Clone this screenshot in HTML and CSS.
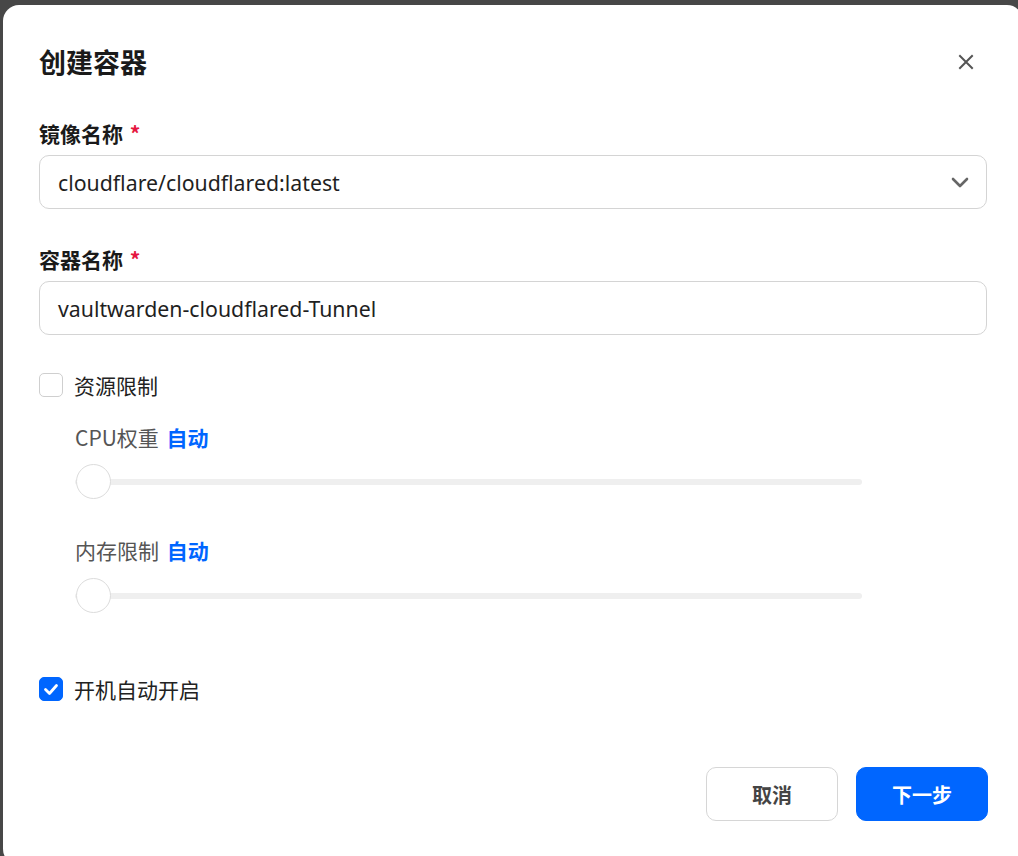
FILE: index.html
```html
<!DOCTYPE html>
<html lang="zh-CN">
<head>
<meta charset="utf-8">
<title>创建容器</title>
<link rel="stylesheet" href="styles.css">
</head>
<body>
<div class="dialog">
  <div class="header">
    <h1 class="title">创建容器</h1>
    <button class="close" aria-label="关闭">
      <svg width="16" height="16" viewBox="0 0 16 16"><path d="M2 2 L14 14 M14 2 L2 14" stroke="#555" stroke-width="2" fill="none" stroke-linecap="square"/></svg>
    </button>
  </div>

  <div class="field first">
    <div class="label">镜像名称 <span class="req">*</span></div>
    <div class="input select">
      <span>cloudflare/cloudflared:latest</span>
      <svg class="chev" width="20" height="20" viewBox="0 0 20 20"><path d="M3 7 L10 14 L17 7" stroke="#666" stroke-width="2.6" fill="none" stroke-linecap="round" stroke-linejoin="round"/></svg>
    </div>
  </div>

  <div class="field second">
    <div class="label">容器名称 <span class="req">*</span></div>
    <div class="input"><span>vaultwarden-cloudflared-Tunnel</span></div>
  </div>

  <div class="check-row res">
    <span class="box"></span>
    <span class="check-text">资源限制</span>
  </div>

  <div class="sub">
    <div class="sub-label cpu">CPU权重 <span class="auto">自动</span></div>
    <div class="slider s1"><div class="track"></div><div class="thumb"></div></div>
    <div class="sub-label mem">内存限制 <span class="auto">自动</span></div>
    <div class="slider s2"><div class="track"></div><div class="thumb"></div></div>
  </div>

  <div class="check-row boot">
    <span class="box checked">
      <svg width="24" height="24" viewBox="0 0 24 24"><path d="M6.5 12.5 L10.5 16.5 L17.5 8.5" stroke="#fff" stroke-width="2.8" fill="none" stroke-linecap="round" stroke-linejoin="round"/></svg>
    </span>
    <span class="check-text">开机自动开启</span>
  </div>

  <div class="footer">
    <button class="btn cancel">取消</button>
    <button class="btn primary">下一步</button>
  </div>
</div>
</body>
</html>
```

FILE: styles.css
```css
html, body {
  margin: 0;
  padding: 0;
  height: 100%;
  overflow: hidden;
}
body {
  background: #474747;
  font-family: "Noto Sans", "Noto Sans CJK SC", sans-serif;
  color: #222;
  padding: 5px 0 0 3px;
  box-sizing: border-box;
}
.dialog {
  width: 1020px;
  height: 860px;
  background: #fff;
  border-radius: 16px;
  padding: 0 36px;
  box-sizing: border-box;
}
.header {
  display: flex;
  align-items: center;
  justify-content: space-between;
  padding-top: 38px;
  height: 38px;
  box-sizing: content-box;
}
.title {
  margin: 0;
  font-size: 27px;
  font-weight: 700;
  line-height: 38px;
  color: #1a1a1a;
  font-family: "Noto Sans CJK SC", sans-serif;
}
.close {
  border: 0;
  background: none;
  padding: 0;
  width: 16px;
  height: 16px;
  margin-right: 13px;
  display: flex;
}
.field.first { margin-top: 40px; }
.field.second { margin-top: 38px; }
.label {
  font-family: "Noto Sans CJK SC", sans-serif;
  font-size: 21px;
  font-weight: 700;
  line-height: 24px;
  color: #1a1a1a;
  margin-bottom: 10px;
}
.req { color: #e5173f; margin-left: 2px; }
.input {
  height: 54px;
  border: 1px solid #d4d4d4;
  border-radius: 10px;
  box-sizing: border-box;
  display: flex;
  align-items: center;
  justify-content: space-between;
  padding: 0 16px 0 18px;
  font-size: 21.3px;
  color: #1f1f1f;
}
.chev { display: block; }
.check-row {
  display: flex;
  align-items: center;
  height: 24px;
}
.check-row.res { margin-top: 38px; }
.check-row.boot { margin-top: 63px; }
.box {
  width: 24px;
  height: 24px;
  box-sizing: border-box;
  border: 1.5px solid #cfcfcf;
  border-radius: 5px;
  margin-right: 11px;
  display: flex;
}
.box.checked {
  background: #0066ff;
  border-color: #0066ff;
}
.box.checked svg { margin: -1.5px; }
.check-text {
  font-family: "Noto Sans CJK SC", sans-serif;
  font-size: 21px;
  color: #222;
  line-height: 24px;
}
.sub { padding-left: 36px; }
.sub-label {
  font-family: "Noto Sans CJK SC", sans-serif;
  font-size: 21px;
  line-height: 24px;
  color: #555;
}
.sub-label.cpu { margin-top: 28px; }
.sub-label.mem { margin-top: 38px; }
.auto {
  color: #0066ff;
  font-weight: 700;
  margin-left: 3px;
}
.slider {
  position: relative;
  width: 787px;
  height: 36px;
  display: flex;
  align-items: center;
}
.slider.s1 { margin-top: 15px; }
.slider.s2 { margin-top: 16px; }
.track {
  width: 100%;
  height: 6px;
  border-radius: 3px;
  background: #efefef;
}
.thumb {
  position: absolute;
  left: 1px;
  top: 0;
  width: 35px;
  height: 35px;
  border-radius: 50%;
  background: #fff;
  border: 1px solid #dcdcdc;
  box-sizing: border-box;
}
.footer {
  display: flex;
  justify-content: flex-end;
  gap: 18px;
  margin-top: 66px;
  margin-right: -1px;
}
.btn {
  width: 132px;
  height: 54px;
  border-radius: 10px;
  font-family: "Noto Sans CJK SC", sans-serif;
  font-size: 20px;
  font-weight: 700;
  cursor: pointer;
}
.cancel {
  background: #fff;
  border: 1px solid #d6d6d6;
  color: #444;
}
.primary {
  background: #0066ff;
  border: 1px solid #0066ff;
  color: #fff;
}
```
